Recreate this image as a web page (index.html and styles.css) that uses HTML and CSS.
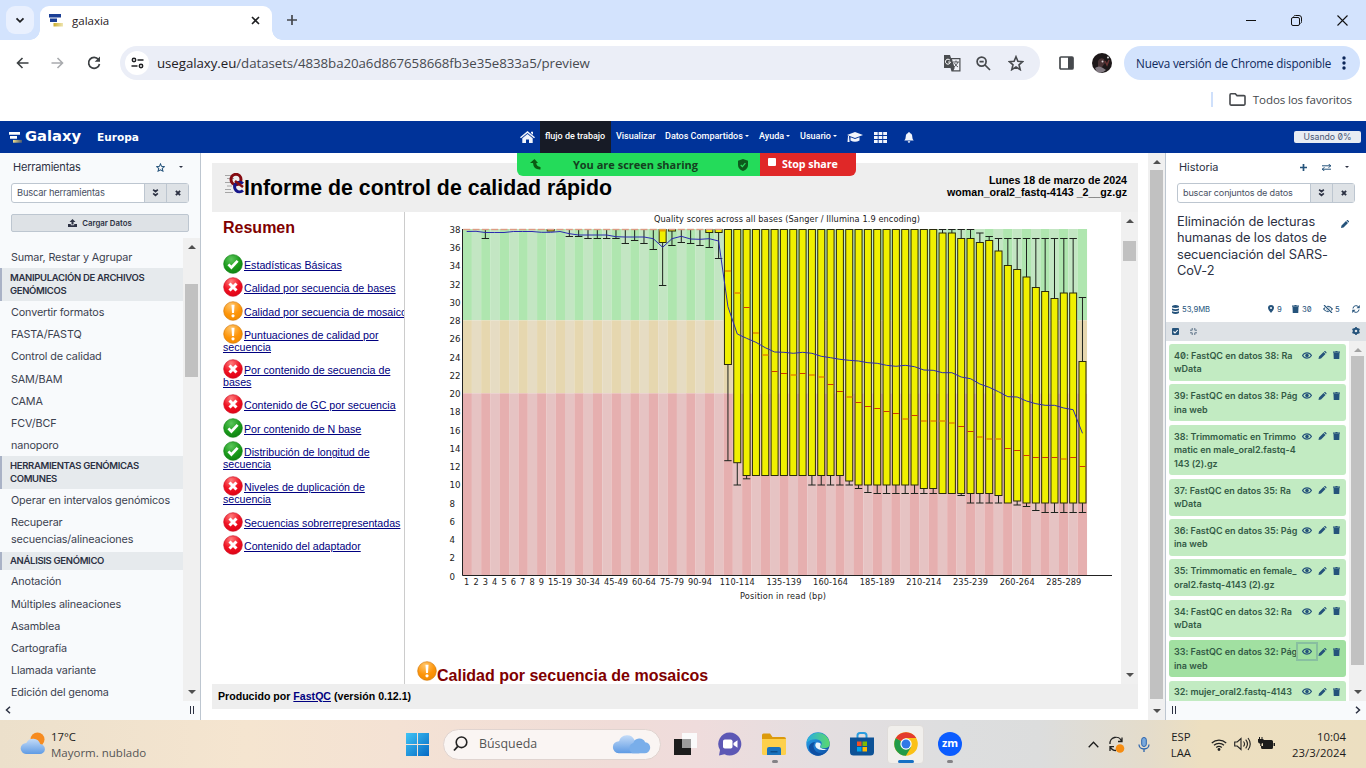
FILE: index.html
```html
<!DOCTYPE html>
<html lang="es">
<head>
<meta charset="utf-8">
<title>galaxia</title>
<link rel="stylesheet" href="styles.css">
</head>
<body>
<svg class="defs" aria-hidden="true">
  <defs>
    <radialGradient id="gOk" cx=".4" cy=".25" r=".8"><stop offset="0" stop-color="#5cc65c"/><stop offset=".6" stop-color="#1a9a1a"/><stop offset="1" stop-color="#0f7f12"/></radialGradient>
    <radialGradient id="gBad" cx=".4" cy=".2" r=".85"><stop offset="0" stop-color="#ff7d7d"/><stop offset=".55" stop-color="#f01222"/><stop offset="1" stop-color="#dd0014"/></radialGradient>
    <radialGradient id="gWarn" cx=".4" cy=".2" r=".85"><stop offset="0" stop-color="#ffc56b"/><stop offset=".6" stop-color="#fd9408"/><stop offset="1" stop-color="#f08a00"/></radialGradient>
    <linearGradient id="gCloud" x1="0" y1="0" x2="0" y2="1"><stop offset="0" stop-color="#c5dcf8"/><stop offset="1" stop-color="#5f9be4"/></linearGradient>
    <linearGradient id="gWin" x1="0" y1="0" x2="1" y2="1"><stop offset="0" stop-color="#3fc4f5"/><stop offset="1" stop-color="#0669c4"/></linearGradient>
    <linearGradient id="gGold" x1="0" y1="0" x2="1" y2="0"><stop offset="0" stop-color="#c9ab2c"/><stop offset="1" stop-color="#efe6b4"/></linearGradient>
    <linearGradient id="gGoldDark" x1="0" y1="0" x2="1" y2="0"><stop offset="0" stop-color="#f3e08a"/><stop offset="1" stop-color="#4a5a70"/></linearGradient>
    <linearGradient id="gEdge" x1="0" y1="0" x2="1" y2="1"><stop offset="0" stop-color="#2aa9e6"/><stop offset=".5" stop-color="#1b78cf"/><stop offset="1" stop-color="#0b4a9c"/></linearGradient>
    <linearGradient id="gEdge2" x1="0" y1="0" x2="1" y2="0"><stop offset="0" stop-color="#2aaee0"/><stop offset="1" stop-color="#5bd96c"/></linearGradient>
  </defs>
  <symbol id="ok" viewBox="0 0 20 20"><circle cx="10" cy="10" r="9.3" fill="url(#gOk)" stroke="#118416" stroke-width=".7"/><path d="M5.4 10.400l3 3.1 6.200-6.600" fill="none" stroke="#fff" stroke-width="2.700"/></symbol>
  <symbol id="bad" viewBox="0 0 20 20"><circle cx="10" cy="10" r="9.300" fill="url(#gBad)" stroke="#cf1426" stroke-width=".7"/><path d="M6.500 6.500l7 7M13.500 6.500l-7 7" stroke="#fff" stroke-width="3"/></symbol>
  <symbol id="warn" viewBox="0 0 20 20"><circle cx="10" cy="10" r="9.300" fill="url(#gWarn)" stroke="#d47c10" stroke-width=".7"/><path d="M8.500 3.800h3l-.5 8.200H9z" fill="#fff"/><circle cx="10" cy="14.800" r="1.600" fill="#fff"/></symbol>
  <symbol id="eye" viewBox="0 0 18 12"><path d="M1 6C4.500-.2 13.500-.2 17 6 13.500 12.200 4.500 12.200 1 6z" fill="none" stroke="currentColor" stroke-width="2.200"/><circle cx="9" cy="6" r="3.200" fill="currentColor"/></symbol>
  <symbol id="pen" viewBox="0 0 16 16"><path d="M0 16l1-5L10 2l4 4-9 9zM11 1l1-1h1.500L16 2.500V4l-1 1z" fill="currentColor"/></symbol>
  <symbol id="bin" viewBox="0 0 14 16"><path d="M0 1h4.500L5.500 0h3l1 1H14v2.500H0zM1 4h12L12.500 16h-11z" fill="currentColor"/></symbol>
  <symbol id="down2" viewBox="0 0 10 12"><path d="M1.500 1L5 4l3.500-3M1.500 6.500L5 9.500l3.500-3" fill="none" stroke="currentColor" stroke-width="2.600"/></symbol>
  <symbol id="x" viewBox="0 0 10 10"><path d="M1.500 1.500l7 7M8.500 1.500l-7 7" stroke="currentColor" stroke-width="3.200"/></symbol>
  <symbol id="cloud" viewBox="0 0 40 24"><path d="M7 22a6.500 6.500 0 0 1 .5-13 9 9 0 0 1 17-1 7.500 7.500 0 0 1 5 14z" fill="url(#gCloud)"/><path d="M22 22a6 6 0 0 1 1-11 7 7 0 0 1 13-1 6 6 0 0 1-1 12z" fill="#79aeea"/></symbol>
</svg>

<div class="screen">
  <header class="tabs">
    <span class="tab-search"><svg width="10" height="7" viewBox="0 0 10 7"><path d="M1.500 1.300L5 4.800l3.500-3.500" fill="none" stroke="#1f2023" stroke-width="1.800"/></svg></span>
    <div class="tab">
      <svg class="favicon" width="14" height="13" viewBox="0 0 14 13"><path fill="#1b3f96" d="M0 0h12v3.500H0zM1 4.500h7V8H1z"/><path fill="url(#gGold)" d="M4.500 9H14v3.500H4.500z"/></svg>
      <span class="tab-title">galaxia</span>
      <svg width="9" height="9" viewBox="0 0 9 9"><path d="M1 1l7 7M8 1L1 8" stroke="#1f2023" stroke-width="1.600"/></svg>
    </div>
    <svg class="plus" width="12" height="12" viewBox="0 0 12 12"><path d="M6 1v10M1 6h10" stroke="#45484d" stroke-width="1.700"/></svg>
    <div class="win">
      <svg width="10" height="10" viewBox="0 0 10 10"><path d="M0 5.500h10" stroke="#111"/></svg>
      <svg width="11" height="11" viewBox="0 0 11 11"><path d="M2.500 1.500q.5-1 2-1H8Q10.500.500 10.500 3v3.500q0 1.500-1 2" fill="none" stroke="#111"/><rect x=".5" y="2.500" width="8" height="8" rx="1.500" fill="none" stroke="#111"/></svg>
      <svg width="11" height="11" viewBox="0 0 11 11"><path d="M.5.500l10 10M10.500.500l-10 10" stroke="#111" stroke-width="1.100"/></svg>
    </div>
  </header>

  <div class="toolbar">
    <svg class="t-back" width="13" height="12" viewBox="0 0 13 12"><path d="M12.500 6H1.500M6.500 1L1.500 6l5 5" fill="none" stroke="#3c4043" stroke-width="1.600"/></svg>
    <svg class="t-fwd" width="13" height="12" viewBox="0 0 13 12"><path d="M.5 6h11M6.500 1l5 5-5 5" fill="none" stroke="#a9abae" stroke-width="1.600"/></svg>
    <svg class="t-reload" width="14" height="14" viewBox="0 0 14 14"><path d="M11.500 3.500A5.500 5.500 0 1 0 12.500 8" fill="none" stroke="#3c4043" stroke-width="1.700"/><path d="M13 .5v5.300H7.700L9.500 4l1.700-1.700z" fill="#3c4043"/></svg>
    <div class="omni">
      <span class="site"><svg width="13" height="12" viewBox="0 0 13 12"><g fill="none" stroke="#1f2023" stroke-width="1.500"><circle cx="3" cy="3" r="1.700"/><path d="M6.500 3H12.500M.5 9h6"/><circle cx="10" cy="9" r="1.700"/></g></svg></span>
      <span class="url"><b>usegalaxy.eu</b>/datasets/4838ba20a6d867658668fb3e35e833a5/preview</span>
      <svg class="o-tr" width="17" height="17" viewBox="0 0 17 17"><path d="M0 0h6l1 3h9.500v13.500H7.500L6.500 13H0z" fill="#4a4d51"/><path d="M8 4.300h7.300v11H9.500L10.700 13z" fill="#f2f4fa"/><path d="M6 5.300A2.500 2.500 0 1 0 6.400 7H4.200" fill="none" stroke="#fff"/><path d="M9 7h6M12 5.500V7M14 7q-1 3-4 5M10.500 8q1 2.500 3.500 4" fill="none" stroke="#4a4d51" stroke-width=".9"/></svg>
      <svg class="o-zoom" width="15" height="15" viewBox="0 0 15 15"><circle cx="5.600" cy="5.600" r="4.500" fill="none" stroke="#46494d" stroke-width="1.700"/><path d="M3.500 5.600h4.200M9 9l5 5" stroke="#46494d" stroke-width="1.700"/></svg>
      <svg width="16" height="16" viewBox="0 0 16 16"><path d="M8 1.700l1.900 4.500 4.800.4-3.700 3.200 1.200 4.800L8 12l-4.200 2.600L5 9.800 1.300 6.600l4.800-.4z" fill="none" stroke="#46494d" stroke-width="1.600"/></svg>
    </div>
    <svg class="t-side" width="15" height="14" viewBox="0 0 15 14"><rect x="1" y="1" width="13" height="12" rx="1" fill="#fff" stroke="#46494d" stroke-width="1.700"/><path d="M9 1h5v12H9z" fill="#46494d"/></svg>
    <svg class="t-face" width="20" height="20" viewBox="0 0 20 20"><circle cx="10" cy="10" r="10" fill="#1d1819"/><path d="M6 8q2-4 6-2l1 4-3 4H6z" fill="#4a3436"/><path d="M3 15q4-3 8 0l3 2q-4 4-9 2z" fill="#837b83"/><path d="M13 8l2 4 2-5" fill="none" stroke="#6a3535" stroke-width="1.500"/><circle cx="10.500" cy="8.500" r="1" fill="#d9cccd"/><circle cx="16" cy="4.500" r="1" fill="#dedede"/></svg>
    <div class="update"><span>Nueva versión de Chrome disponible</span><svg width="4" height="14" viewBox="0 0 4 14"><g fill="#0b2659"><circle cx="2" cy="2" r="1.700"/><circle cx="2" cy="7" r="1.700"/><circle cx="2" cy="12" r="1.700"/></g></svg></div>
  </div>

  <div class="bookmarks">
    <i class="bm-sep"></i>
    <svg width="17" height="13" viewBox="0 0 17 13"><path d="M1 2q0-1.200 1-1.200h4.300L8 2.600h7q1 0 1 1v7.500q0 1-1 1H2q-1 0-1-1z" fill="none" stroke="#46494d" stroke-width="1.600"/></svg>
    <span>Todos los favoritos</span>
  </div>

  <nav class="masthead">
    <svg class="logo" width="13" height="11" viewBox="0 0 13 11"><path fill="#fff" d="M0 0h11v2.800H0zM1 3.900h7v2.800H1z"/><path fill="url(#gGoldDark)" d="M4 7.900h9v2.800H4z"/></svg>
    <span class="brand">Galaxy</span><span class="region">Europa</span>
    <div class="menu">
      <svg class="m-home" width="15" height="12" viewBox="0 0 15 12"><path d="M0 6.300L7.500 0 15 6.300l-1 1L7.500 2 1 7.300zM2.300 7.300L7.500 3l5.200 4.300V12H9V8.500H6V12H2.300zM11 .7h2v3l-2-1.700z" fill="#f2f5fc"/></svg>
      <span class="m m1">flujo de trabajo</span>
      <span class="m m2">Visualizar</span>
      <span class="m m3">Datos Compartidos<i class="caret"></i></span>
      <span class="m m4">Ayuda<i class="caret"></i></span>
      <span class="m m5">Usuario<i class="caret"></i></span>
      <svg class="m-cap" width="16" height="11" viewBox="0 0 16 11"><path d="M8 0l8 3-8 3-8-3zM3.500 5.200L8 7l4.500-1.800V8.500q-4.500 2.500-9 0zM1 4h1l.6 6H.5z" fill="#f2f5fc"/></svg>
      <svg class="m-grid" width="13" height="11" viewBox="0 0 13 11"><path d="M0 0h3.700v3H0zM4.600 0h3.700v3H4.600zM9.200 0H13v3H9.200zM0 4h3.700v3H0zM4.600 4h3.700v3H4.600zM9.200 4H13v3H9.200zM0 8h3.700v3H0zM4.600 8h3.700v3H4.600zM9.200 8H13v3H9.200z" fill="#f2f5fc"/></svg>
      <svg class="m-bell" width="10" height="11" viewBox="0 0 10 11"><path d="M5 0q.8 0 .8 1Q8.300 1.600 8.300 5q0 2.200 1.400 3.500H.3Q1.700 7.200 1.700 5q0-3.400 2.500-4Q4.200 0 5 0zM3.700 9.200h2.600Q6 10.700 5 10.700T3.700 9.200z" fill="#f2f5fc"/></svg>
    </div>
    <span class="quota">Usando 0%</span>
  </nav>

  <main class="work">
    <aside class="tools">
      <div class="t-head"><span>Herramientas</span>
        <svg class="t-star" width="9" height="9" viewBox="0 0 16 16"><path d="M8 1.500l2 4.500 4.800.5-3.600 3.200 1.100 4.800L8 12l-4.300 2.500 1.100-4.800L1.200 6.500 6 6z" fill="none" stroke="#25537b" stroke-width="1.800"/></svg>
        <i class="caret dark"></i></div>
      <div class="search"><span class="field">Buscar herramientas</span><span class="sbtn"><svg width="7" height="8"><use href="#down2"/></svg></span><span class="sbtn"><svg width="6" height="6"><use href="#x"/></svg></span></div>
      <div class="upload"><svg width="9" height="8" viewBox="0 0 9 8"><path d="M4.500 0L7.500 3H5.500v2.500h-2V3h-2zM0 5h2.800v1.200h3.400V5H9v3H0z" fill="#2c3143"/></svg>Cargar Datos</div>
      <div class="tl-wrap">
        <div class="tlist">
          <p class="first">Filtrar y ordenar</p>
          <p>Sumar, Restar y Agrupar</p>
          <h4>MANIPULACIÓN DE ARCHIVOS<br>GENÓMICOS</h4>
          <p>Convertir formatos</p><p>FASTA/FASTQ</p><p>Control de calidad</p><p>SAM/BAM</p><p>CAMA</p><p>FCV/BCF</p><p>nanoporo</p>
          <h4>HERRAMIENTAS GENÓMICAS<br>COMUNES</h4>
          <p>Operar en intervalos genómicos</p><p class="two">Recuperar<br>secuencias/alineaciones</p>
          <h4>ANÁLISIS GENÓMICO</h4>
          <p>Anotación</p><p>Múltiples alineaciones</p><p>Asamblea</p><p>Cartografía</p><p>Llamada variante</p><p>Edición del genoma</p>
        </div>
        <div class="sb sb-l"><i class="up"></i><i class="thumb"></i><i class="dn"></i></div>
      </div>
      <div class="foot"><svg width="6" height="8" viewBox="0 0 6 8"><path d="M5 .8L1.500 4 5 7.200" fill="none" stroke="#2c3143" stroke-width="1.500"/></svg><i class="grip"></i></div>
    </aside>

    <section class="center">
      <div class="report">
        <div class="r-head">
          <svg width="22" height="22" viewBox="0 0 22 22"><path d="M0 2.500h9M2 5.500h7M0 9.500h6M2 13h5M0 16.500h6M0 19.500h8" stroke="#a5a5a5" stroke-width="1"/><ellipse cx="11" cy="6.500" rx="5" ry="5.200" fill="none" stroke="#850b12" stroke-width="3"/><path d="M18 10.500A5 4.800 0 1 0 18 17.500" fill="none" stroke="#16168a" stroke-width="3"/><path d="M10 8l8 6" stroke="#850b12" stroke-width="2.500"/></svg>
          <h1>Informe de control de calidad rápido</h1>
          <div class="r-meta">Lunes 18 de marzo de 2024<br>woman_oral2_fastq-4143 _2__gz.gz</div>
        </div>
        <div class="r-body">
          <div class="summary">
            <h2>Resumen</h2>
            <ul>
              <li><svg><use href="#ok"/></svg><a>Estadísticas Básicas</a></li>
              <li><svg><use href="#bad"/></svg><a>Calidad por secuencia de bases</a></li>
              <li><svg><use href="#warn"/></svg><a>Calidad por secuencia de mosaicos</a></li>
              <li class="l2"><svg><use href="#warn"/></svg><a>Puntuaciones de calidad por<br>secuencia</a></li>
              <li class="l2"><svg><use href="#bad"/></svg><a>Por contenido de secuencia de<br>bases</a></li>
              <li><svg><use href="#bad"/></svg><a>Contenido de GC por secuencia</a></li>
              <li><svg><use href="#ok"/></svg><a>Por contenido de N base</a></li>
              <li class="l2"><svg><use href="#ok"/></svg><a>Distribución de longitud de<br>secuencia</a></li>
              <li class="l2"><svg><use href="#bad"/></svg><a>Niveles de duplicación de<br>secuencia</a></li>
              <li><svg><use href="#bad"/></svg><a>Secuencias sobrerrepresentadas</a></li>
              <li><svg><use href="#bad"/></svg><a>Contenido del adaptador</a></li>
            </ul>
          </div>
          <div class="pane">
            <svg id="chart" width="716" height="448" viewBox="405 212 716 448"></svg>
            <h2 class="mod"><svg width="20" height="20"><use href="#warn"/></svg>Calidad por secuencia de mosaicos</h2>
          </div>
          <div class="sb sb-p"><i class="up"></i><i class="thumb"></i><i class="dn"></i></div>
        </div>
        <div class="r-foot">Producido por&nbsp;<a>FastQC</a>&nbsp;(versión 0.12.1)</div>
      </div>
      <div class="sb sb-c"><i class="up"></i><i class="thumb"></i><i class="dn"></i></div>
      <div class="share"><div class="sh-g"><svg width="11" height="11" viewBox="0 0 11 11"><path d="M0 4L4.500 0 8 4H6.300Q6.300 7.500 10.500 8v2.500Q3.500 11 3 4z" fill="#0a5c12"/></svg><span>You are screen sharing</span><svg width="10" height="12" viewBox="0 0 10 12"><path d="M5 0l5 1.700V6q0 4-5 6-5-2-5-6V1.700z" fill="#0d5a1c"/><path d="M2.700 6l1.700 1.700 3-3.500" fill="none" stroke="#2bdb5e" stroke-width="1.200"/></svg></div><div class="sh-r"><i></i>Stop share</div></div>
    </section>

    <aside class="history">
      <div class="h-head"><span>Historia</span>
        <svg class="h-add" width="7" height="7" viewBox="0 0 7 7"><path d="M3.500 0v7M0 3.500h7" stroke="#25537b" stroke-width="1.700"/></svg>
        <svg class="h-sw" width="9" height="7" viewBox="0 0 9 7"><path d="M0 1.800h8M9 5.200H1M6.500 0L9 1.800 6.500 3.500M2.500 3.500L0 5.200 2.500 7" fill="none" stroke="#25537b" stroke-width="1"/></svg>
        <i class="caret dark"></i></div>
      <div class="search hs"><span class="field">buscar conjuntos de datos</span><span class="sbtn"><svg width="7" height="8"><use href="#down2"/></svg></span><span class="sbtn"><svg width="6" height="6"><use href="#x"/></svg></span></div>
      <div class="h-title"><span>Eliminación de lecturas<br>humanas de los datos de<br>secuenciación del SARS-<br>CoV-2</span><svg width="8" height="8"><use href="#pen"/></svg></div>
      <div class="h-stats">
        <svg width="7" height="9" viewBox="0 0 7 9"><path d="M0 1q3.500-2 7 0v1.300q-3.500 1.500-7 0zM0 3.500q3.500 1.500 7 0v1.700q-3.500 1.500-7 0zM0 6.300q3.500 1.500 7 0V8q-3.500 2-7 0z" fill="#25537b"/></svg><span class="size">53,9MB</span>
        <svg width="6" height="8" viewBox="0 0 6 8"><path d="M3 0a3 3 0 0 1 3 3Q6 5 3 8 0 5 0 3a3 3 0 0 1 3-3z" fill="#25537b"/><circle cx="3" cy="3" r="1" fill="#fff"/></svg><span class="n1">9</span>
        <svg width="7" height="8"><use href="#bin"/></svg><span class="n2">30</span>
        <svg width="10" height="8" viewBox="0 0 10 8"><path d="M.6 4Q5-1.500 9.400 4 5 9.500.6 4z" fill="none" stroke="#25537b" stroke-width="1.200"/><circle cx="5" cy="4" r="1.500" fill="#25537b"/><path d="M1 0l8 8" stroke="#fff" stroke-width="2.200"/><path d="M1 0l8 8" stroke="#25537b" stroke-width="1.100"/></svg><span class="n3">5</span>
        <svg width="8" height="8" viewBox="0 0 16 16"><path d="M2 7a6 6 0 0 1 11-3M14 9a6 6 0 0 1-11 3" fill="none" stroke="#25537b" stroke-width="2"/><path d="M15.500 0v6.500H9zM.5 16V9.500H7z" fill="#25537b"/></svg>
      </div>
      <div class="h-ops">
        <svg width="7" height="7" viewBox="0 0 7 7"><rect width="7" height="7" rx="1" fill="#25537b"/><path d="M1.500 3.500L3 5l2.700-3" fill="none" stroke="#fff" stroke-width="1.100"/></svg>
        <svg class="cmp" width="7" height="7" viewBox="0 0 7 7"><path d="M0 2.200h2.200V0M4.800 0v2.200H7M0 4.800h2.200V7M7 4.800H4.800V7" fill="none" stroke="#5a7186"/></svg>
        <svg class="gear" width="8" height="8" viewBox="0 0 8 8"><circle cx="4" cy="4" r="2.300" fill="none" stroke="#25537b" stroke-width="2"/><path d="M4 0v1.500M4 6.500V8M.5 2l1.300.8M6.200 5.200l1.300.8M.5 6l1.300-.8M6.200 2.800L7.500 2" stroke="#25537b" stroke-width="1.600"/></svg>
      </div>
      <div class="hl-wrap">
        <div class="hlist">
          <div class="ds"><span>40: FastQC en datos 38: Ra<br>wData</span></div>
          <div class="ds"><span>39: FastQC en datos 38: Pág<br>ina web</span></div>
          <div class="ds"><span>38: Trimmomatic en Trimmo<br>matic en male_oral2.fastq-4<br>143 (2).gz</span></div>
          <div class="ds"><span>37: FastQC en datos 35: Ra<br>wData</span></div>
          <div class="ds"><span>36: FastQC en datos 35: Pág<br>ina web</span></div>
          <div class="ds"><span>35: Trimmomatic en female_<br>oral2.fastq-4143 (2).gz</span></div>
          <div class="ds"><span>34: FastQC en datos 32: Ra<br>wData</span></div>
          <div class="ds active"><span>33: FastQC en datos 32: Pág<br>ina web</span></div>
          <div class="ds"><span>32: mujer_oral2.fastq-4143</span></div>
        </div>
        <div class="sb sb-h"><i class="up off"></i><i class="thumb"></i><i class="dn"></i></div>
      </div>
      <div class="foot hf"><i class="grip"></i><svg width="6" height="8" viewBox="0 0 6 8"><path d="M1 .8L4.500 4 1 7.200" fill="none" stroke="#2c3143" stroke-width="1.500"/></svg></div>
    </aside>
  </main>

  <footer class="taskbar">
    <svg class="wx" width="26" height="24" viewBox="0 0 26 24"><circle cx="17.500" cy="7.500" r="7" fill="#f68b1f"/><path d="M6 22a5.500 5.500 0 0 1 .3-11 7.500 7.500 0 0 1 14 1 5 5 0 0 1-.8 10z" fill="url(#gCloud)"/></svg>
    <div class="wx-t">17°C<br><em>Mayorm. nublado</em></div>
    <div class="apps">
      <svg width="23" height="23" viewBox="0 0 23 23"><path d="M0 0h11v11H0zM12 0h11v11H12zM0 12h11v11H0zM12 12h11v11H12z" fill="url(#gWin)"/></svg>
      <div class="find"><svg width="15" height="16" viewBox="0 0 15 16"><circle cx="8.500" cy="6.300" r="5.300" fill="none" stroke="#222" stroke-width="1.600"/><path d="M4.800 10.300L1 14.500" stroke="#222" stroke-width="1.800"/></svg><span>Búsqueda</span><svg width="41" height="22"><use href="#cloud"/></svg></div>
      <svg class="a-tv" width="23" height="22" viewBox="0 0 23 22"><path d="M8 0h15v15H8z" fill="#fafafa"/><path d="M0 6h17v16H0z" fill="#1d1d1d"/><path d="M8 6h9v9H8z" fill="#9d9d9d"/></svg>
      <svg class="a-tm" width="24" height="24" viewBox="0 0 24 24"><path d="M12 .5a11.500 11.500 0 1 1-5.500 21.700L1 23.500 2 18A11.500 11.500 0 0 1 12 .5z" fill="#5d58b5"/><rect x="5" y="7.500" width="9.500" height="9" rx="1.800" fill="#fff"/><path d="M15.500 11l4-2.800v7.600l-4-2.800z" fill="#fff"/></svg>
      <svg class="a-ex" width="24" height="23" viewBox="0 0 24 23"><path d="M0 2q0-1.500 1.500-1.500H8L10.500 4H22q2 0 2 2v14H0z" fill="#dc9a0c"/><path d="M0 6h24v14.500q0 1.500-1.500 1.500h-21Q0 22 0 20.500z" fill="#fdd04c"/><path d="M5 22v-6q0-2 2-2h10q2 0 2 2v6z" fill="#1972bd"/><path d="M8.500 18h7v1.500h-7z" fill="#0c4e8c"/></svg>
      <svg class="a-ed" width="24" height="24" viewBox="0 0 24 24"><circle cx="12" cy="12" r="11.700" fill="url(#gEdge)"/><path d="M.5 11A11.700 11.700 0 0 1 23.700 11q.3 5-5 5.300-4.700 0-4.500-2.300 2.300-1.500 1-4.300Q13.500 7 9.500 7.200 3 7.500.5 11z" fill="url(#gEdge2)"/><path d="M9 10q-3.500 5 1 9.500 4 3 9 1.500-5 4-10.500 2Q2.500 20 3 14.500 4 10.500 9 10z" fill="#0e4fa3"/><path d="M10.500 10.500q-2.500 2.500 0 5.500 3.500 3.500 11 1.200-5 .6-7.300-1.700-.5-1.300.5-2.500.7-3-4.200-2.500z" fill="#e9f3fb"/></svg>
      <svg class="a-st" width="24" height="24" viewBox="0 0 24 24"><path d="M7.500 6V3.500Q7.500 1 10 1h4q2.500 0 2.500 2.500V6" fill="none" stroke="#2a9de0" stroke-width="2"/><path d="M0 5.500h24V20q0 3.500-3.500 3.500h-17Q0 23.500 0 20z" fill="#0d5296"/><path d="M7 9.500h4.500v4.500H7z" fill="#f25022"/><path d="M12.500 9.500H17v4.500h-4.500z" fill="#7fba00"/><path d="M7 15h4.500v4.500H7z" fill="#00a4ef"/><path d="M12.500 15H17v4.500h-4.500z" fill="#ffb900"/></svg>
      <div class="a-ch"><svg width="24" height="24" viewBox="0 0 24 24"><circle cx="12" cy="12" r="11.800" fill="#fbc116"/><path d="M1.800 6.100L12 12l5.100 2.900-5.200 8.900A11.800 11.800 0 0 1 1.800 6.100z" fill="#229b48"/><path d="M1.800 6.100A11.800 11.800 0 0 1 22.200 6.100H12l-5 3z" fill="#e33b2e"/><circle cx="12" cy="12" r="5.700" fill="#fff"/><circle cx="12" cy="12" r="4.500" fill="#3079e6"/></svg></div>
      <div class="a-zm">zm</div>
    </div>
    <div class="tray">
      <svg class="y1" width="11" height="7" viewBox="0 0 11 7"><path d="M.7 6.200L5.500 1.300l4.800 4.900" fill="none" stroke="#1c1c1c" stroke-width="1.300"/></svg>
      <svg class="y2" width="17" height="17" viewBox="0 0 17 17"><path d="M2 8a6 6 0 0 1 11.500-3M14 1.500V5.500H10M8 14.500q-4 0-5.700-3.500M2 15v-4.300h4" fill="none" stroke="#222" stroke-width="1.300"/><circle cx="12" cy="12.500" r="4.300" fill="#f68d12"/></svg>
      <svg class="y3" width="12" height="15" viewBox="0 0 12 15"><rect x="3.700" y=".5" width="4.600" height="9" rx="2.300" fill="#7aa9dc" stroke="#2a64ad"/><path d="M1 7.500a5 4.500 0 0 0 10 0M6 12v3" fill="none" stroke="#2a64ad" stroke-width="1.300"/></svg>
      <div class="lang">ESP<br>LAA</div>
      <svg class="y4" width="16" height="13" viewBox="0 0 16 13"><path d="M.8 5A10.500 10.500 0 0 1 15.200 5M3 7.300a7.300 7.300 0 0 1 10 0M5.200 9.500a4.300 4.300 0 0 1 5.600 0" fill="none" stroke="#222" stroke-width="1.200"/><circle cx="8" cy="11.500" r="1.400" fill="#222"/></svg>
      <svg class="y5" width="17" height="14" viewBox="0 0 17 14"><path d="M.7 5h2.500L7 1.500v11L3.200 9H.7zM9.500 4.500q2 2.500 0 5M11.700 2.700q3.500 4.300 0 8.600M14 1q4.500 6 0 12" fill="none" stroke="#222" stroke-width="1.100"/></svg>
      <svg class="y6" width="17" height="14" viewBox="0 0 17 14"><path d="M5 3h8.500q1.500 0 1.500 1.500v6q0 1.500-1.500 1.500H4.500Q3 12 3 10.500V9h2zM15.500 6H17v3h-1.500zM0 2h1V0h1v2h1.500V0h1v2h1v2.500Q5.500 6.500 3.500 6.700V9H2.200V6.700Q0 6.500 0 4.500z" fill="#1c1c1c"/></svg>
      <div class="clock">10:04<br>23/3/2024</div>
    </div>
  </footer>
</div>
<script src="chart.js"></script>
</body>
</html>
```
FILE: chart.js
```javascript
(function () {
  var svg = document.getElementById('chart');
  var NS = 'http://www.w3.org/2000/svg';
  var LEFT = 462.5, STEP = 9.32, TOP = 229, BASE = 575.5, N = 67;

  function add(tag, attrs, text) {
    var el = document.createElementNS(NS, tag);
    for (var k in attrs) el.setAttribute(k, attrs[k]);
    if (text !== undefined) el.textContent = text;
    svg.appendChild(el);
    return el;
  }
  function mid(i) { return 466.7 + 9.33 * i; }

  // Quality zones, striped by position
  for (var i = 0; i < N; i++) {
    var x = LEFT + STEP * i, even = i % 2 === 0;
    [[TOP, 320.3, '#afe6af', '#c3e6c3'], [320.3, 393.3, '#e6d7af', '#e6dcc3'], [393.3, BASE, '#e6afaf', '#e6c3c3']].forEach(function (z) {
      add('rect', { x: x, y: z[0], width: STEP + 0.1, height: z[1] - z[0], fill: even ? z[2] : z[3] });
    });
  }

  // [index, box top, box bottom, whisker top, whisker bottom]
  var T = 229.5;
  var boxes = [
    [2,T,T,T,238.5],[9,T,231,T,231],[11,T,T,T,236.5],[12,T,T,T,236.5],[13,T,T,T,238.5],[14,T,T,T,238.5],[15,T,T,T,238.5],[16,T,T,T,238.5],
    [17,T,T,T,243.5],[18,T,T,T,240.5],[19,T,T,T,243.5],[20,T,T,T,249.5],[21,T,242.5,T,285.5],[22,T,231,T,245.5],[23,T,T,T,242.5],
    [24,T,T,T,243.5],[25,T,T,T,245.5],[26,T,232.5,T,247.5],[27,T,232.5,T,258.5],[28,T,364.5,T,460.7],[29,T,462.7,T,485],[30,T,475.5,T,478.8],
    [31,T,475.5],[32,T,475.5],[33,T,475.5],[34,T,475.5],[35,T,475.5],[36,T,475.5],
    [37,T,475.5,T,485],[38,T,475.5,T,485],[39,T,475.5,T,485],[40,T,475.5,T,485],[41,T,481,T,485],[42,T,485,T,488.5],[43,T,485,T,492.5],
    [44,T,485,T,493.5],[45,T,485,T,493.5],[46,T,485,T,493.5],[47,T,485,T,493.5],[48,T,485,T,493.5],[49,T,488.5,T,493.5],[50,T,488.5,T,493.5],
    [51,233,493.5,T,493.5],[52,233,493.5,T,493.5],[53,238.5,493.5,T,495.5],[54,238.5,493.5,T,503],[55,242.5,493.5,233,503],[56,240.5,493.5,236.5,503],
    [57,251,495.5,238.5,503],[58,265.5,503,238.5,503],[59,269.5,501,238.5,505],[60,277,503,238.5,506.5],[61,287.5,503,238.5,510.5],
    [62,291.5,503,238.5,512.5],[63,298.5,503,238.5,512.5],[64,293,503,238.5,512.5],[65,293,503,238.5,512.5],[66,361.5,503,297.5,512.5]
  ];
  boxes.forEach(function (b) {
    var c = mid(b[0]), wt = b[3] || b[1], wb = b[4] || b[2];
    function whisker(y1, y2) {
      add('path', { d: 'M' + c + ' ' + y1 + 'V' + y2 + 'M' + (c - 3.7) + ' ' + y2 + 'h7.4', stroke: '#1c221c', fill: 'none', 'stroke-width': 1 });
    }
    if (wb > b[2]) whisker(b[2], wb);
    if (wt < b[1]) whisker(b[1], wt);
    if (b[2] > b[1]) add('rect', { x: c - 3.5, y: b[1], width: 7, height: b[2] - b[1], fill: '#f0f000', stroke: '#2b2b0c', 'stroke-width': 1 });
  });

  // Medians
  for (i = 0; i < 28; i++) {
    add('path', { d: 'M' + (mid(i) - 3.5) + ' 229.500h7', stroke: '#dc9c84', 'stroke-width': 1.4 });
  }
  add('path', { d: 'M' + (mid(21) - 3) + ' 230.5h6', stroke: '#e8a100', 'stroke-width': 2 });
  var med = [271,293,307.5,333,355,371.5,373.5,375,373.5,375,377,384.5,391.5,397,402.5,406.5,408.5,411.5,413.5,419,415.5,421,421,421,423,
    426.5,431.5,437,439,439,448.5,450.5,455.5,457.5,457.5,457.5,459,457.5,466.5];
  med.forEach(function (y, k) {
    var c = mid(28 + k), soft = y % 1 === 0;
    add('path', { d: 'M' + (c - 3) + ' ' + y + 'h6', stroke: soft ? '#e69a00' : '#cf3a00', 'stroke-width': soft ? 1.8 : 1 });
  });

  // Mean
  var mean = [231.5,231.3,232.5,232.5,232.5,231.5,231.5,231.5,232.3,232.3,231.5,233.7,235,235,235,235,236.7,237,237,237,238.7,247.3,238.7,236.3,
    239,239.3,238.7,241,306.7,334,338.3,342.3,347.7,352,352.3,353.3,352.3,353.3,356.3,357.7,359.3,360.3,361,362.7,363.3,365.3,366.3,365.3,366.7,
    370,370.3,372.7,372.7,377,378.7,384,387.3,391.7,396.7,397,401,403.7,405.3,405.3,408,409.7,433.3];
  add('polyline', { points: mean.map(function (y, k) { return mid(k) + ',' + y; }).join(' '), fill: 'none', stroke: '#2b2bb0', 'stroke-width': 1 });

  // Axes
  add('path', { d: 'M462.5 229V575.5H1112', fill: 'none', stroke: '#222', 'stroke-width': 1 });
  for (var q = 0; q <= 38; q += 2) {
    add('text', { x: 449.5, y: 579.5 - q * 9.12, textLength: q < 10 ? 5.5 : 11, lengthAdjust: 'spacingAndGlyphs' }, q);
  }
  for (i = 0; i < 9; i++) add('text', { x: mid(i), y: 585.3, 'text-anchor': 'middle' }, i + 1);
  [[10,'15-19',24],[13,'30-34',24],[16,'45-49',24],[19,'60-64',24],[22,'75-79',24],[25,'90-94',24],[29,'110-114',35],[34,'135-139',35],[39,'160-164',35],
   [44,'185-189',35],[49,'210-214',35],[54,'235-239',35],[59,'260-264',35],[64,'285-289',35]].forEach(function (l) {
    add('text', { x: mid(l[0]) - l[2] / 2, y: 585.3, textLength: l[2] }, l[1]);
  });
  add('text', { x: 654, y: 222, textLength: 266 }, 'Quality scores across all bases (Sanger / Illumina 1.9 encoding)');
  add('text', { x: 740, y: 599, textLength: 86 }, 'Position in read (bp)');

  // Row actions for each dataset card
  document.querySelectorAll('.ds').forEach(function (d) {
    d.insertAdjacentHTML('beforeend', '<div class="acts"><i class="eye"><svg width="10" height="7"><use href="#eye"/></svg></i><svg width="9" height="8"><use href="#pen"/></svg><svg width="7" height="8"><use href="#bin"/></svg></div>');
  });
})();
```
FILE: styles.css
```css
* { box-sizing: border-box; }
body { margin: 0; overflow: hidden; background: #fff; font-family: Inter, sans-serif; }
.defs { position: absolute; width: 0; height: 0; }
svg { display: block; flex: none; }
h1, h2, h4, p, ul { margin: 0; padding: 0; list-style: none; font-weight: inherit; }
.screen { width: 1366px; height: 768px; display: flex; flex-direction: column; white-space: nowrap; overflow: hidden; }

/* Browser chrome */
.tabs { height: 40px; background: #d3e3fd; display: flex; align-items: center; font-family: "Open Sans", sans-serif; }
.tab-search { width: 28px; height: 28px; margin-left: 6px; border-radius: 9px; background: #e9f0fe; display: grid; place-items: center; }
.tab { width: 232px; height: 34px; margin: 6px 0 0 6px; padding: 0 12px 6px 9px; background: #fff; border-radius: 9px 9px 0 0; display: flex; align-items: center; position: relative; }
.tab::before, .tab::after { content: ""; position: absolute; bottom: 0; width: 10px; height: 10px; }
.tab::before { left: -10px; background: radial-gradient(circle at 0 0, transparent 9.5px, #fff 10px); }
.tab::after { right: -10px; background: radial-gradient(circle at 100% 0, transparent 9.5px, #fff 10px); }
.tab-title { flex: 1; margin-left: 9px; font-size: 11.5px; color: #1f2023; }
.plus { margin-left: 14px; }
.win { margin-left: auto; display: flex; align-items: center; gap: 35px; padding-right: 18px; }
.toolbar { height: 46px; display: flex; align-items: center; background: #fff; font-family: "Open Sans", sans-serif; }
.t-back { margin-left: 16px; }
.t-fwd { margin-left: 22px; }
.t-reload { margin-left: 23px; }
.omni { width: 920px; height: 34px; margin-left: 19px; border-radius: 17px; background: #ebeef7; display: flex; align-items: center; padding: 0 16px 0 5px; }
.site { width: 24px; height: 24px; border-radius: 50%; background: #fff; display: grid; place-items: center; }
.url { flex: 1; margin-left: 8px; font-size: 13.3px; letter-spacing: -.065px; color: #474a50; }
.url b { font-weight: 400; color: #1f2023; }
.o-zoom { margin: 0 17px 0 15px; }
.t-side { margin-left: 19px; }
.t-face { margin-left: 18px; }
.update { width: 236px; height: 34px; margin-left: 12px; padding: 0 14px 0 12px; border-radius: 17px; background: #d3e3fd; color: #0f2a5c; font-size: 11.7px; letter-spacing: -.17px; display: flex; align-items: center; justify-content: space-between; }
.bookmarks { height: 35px; padding: 0 14px 8px 0; display: flex; align-items: center; justify-content: flex-end; font: 11.6px "Open Sans", sans-serif; letter-spacing: -.14px; color: #45484d; background: #fff; }
.bm-sep { width: 2px; height: 15px; background: #cfe0fb; margin-right: 16px; }
.bookmarks span { margin-left: 7px; }

/* Masthead */
.masthead { height: 32px; background: #039; color: #fff; display: flex; align-items: center; position: relative; }
.logo { margin-left: 9px; }
.brand { font: bold 14.7px "DejaVu Sans", sans-serif; margin: 0 0 3px 3px; width: 72px; }
.region { font: bold 10.6px "DejaVu Sans", sans-serif; }
.menu { position: absolute; left: 520px; top: 0; height: 32px; display: flex; align-items: center; font: 500 9px Roboto, sans-serif; }
.m { height: 32px; line-height: 31px; }
.m1 { width: 71px; margin-left: 5px; padding-left: 5px; background: #171b26; }
.m2 { margin-left: 5px; width: 49px; }
.m3 { width: 94px; }
.m4 { width: 41px; }
.m5 { width: 47px; }
.caret { display: inline-block; margin-left: 2px; vertical-align: 2px; border: 2px solid transparent; border-top-color: #fff; border-bottom: 0; }
.caret.dark { border-top-color: #2c3143; }
.m-grid { margin-left: 11px; }
.m-bell { margin-left: 17px; }
.quota { position: absolute; left: 1294px; top: 10px; width: 67px; height: 12px; border-radius: 2px; background: #e8ecf3; color: #465775; font: 8.7px/12px Inter, sans-serif; font-feature-settings: "zero"; text-align: center; }

/* Work area */
.work { height: 567px; display: flex; }
.tools { width: 201px; border-right: 1px solid #bdc6d0; background: #f8fafc; display: flex; flex-direction: column; color: #2c3143; }
.t-head { height: 30px; padding: 0 17px 2px 13px; display: flex; align-items: center; font-size: 11px; letter-spacing: -.2px; }
.t-star { margin-left: auto; }
.t-head .caret { margin-left: 14px; }
.search { height: 20px; margin: 0 11px; border: 1px solid #bdc6d0; border-radius: 3px; display: flex; background: #fff; font-size: 9.3px; letter-spacing: -.18px; color: #495163; flex: none; }
.field { flex: 1; padding-left: 5px; line-height: 18px; }
.search.hs { font-size: 9.1px; letter-spacing: -.18px; }
.sbtn { width: 22px; border-left: 1px solid #bdc6d0; background: #dee2e6; color: #2c3143; display: grid; place-items: center; }
.upload { height: 18px; margin: 11px 11px 0 11px; border: 1px solid #bdc6d0; border-radius: 2px; background: #dee2e6; font-size: 7.8px; font-weight: 600; display: flex; align-items: center; justify-content: center; gap: 5px; }
.tl-wrap { display: flex; height: 463px; margin-top: 6px; overflow: hidden; }
.tlist { width: 183px; overflow: hidden; }
.tlist p { height: 22.2px; padding-left: 11px; font-size: 10.8px; letter-spacing: -.14px; line-height: 23px; color: #3c4250; }
.tlist .first { margin-top: -14px; line-height: 15px; }
.tlist .two { height: 40.3px; line-height: 17px; padding-top: 3px; }
.tlist h4 { border-left: 2px solid #a9b2c6; background: #e6eaed; padding: 2.200px 0 2.900px 8px; font-size: 9.5px; letter-spacing: -.32px; font-weight: 600; line-height: 13.800px; color: #2c3143; }
.foot { height: 19px; display: flex; align-items: center; justify-content: space-between; padding: 0 6px 2px 5px; background: #f8fafc; }
.grip { width: 4px; height: 8px; border: solid #2c3143; border-width: 0 1px; }

/* Scrollbars */
.sb { width: 17px; background: #f0f0f0; display: flex; flex-direction: column; align-items: center; flex: none; }
.sb .up, .sb .dn { border: 4px solid transparent; width: 0; height: 0; }
.sb .up { border-top: 0; border-bottom-color: #505050; margin-top: 7px; }
.sb .up.off { border-bottom-color: #a3a3a3; }
.sb .dn { border-bottom: 0; border-top-color: #505050; margin-top: auto; margin-bottom: 7px; }
.sb .thumb { width: 13px; background: #c1c1c1; }
.sb-l .thumb { margin-top: 35px; height: 93px; }
.sb-p .thumb { margin-top: 18px; height: 20px; }
.sb-c .thumb { margin-top: 6px; height: 529px; }
.sb-h .thumb { margin-top: 4px; height: 309px; }

/* Report */
.center { width: 964px; display: flex; justify-content: space-between; padding-left: 11px; background: #fff; position: relative; font-family: "Liberation Sans", Arial, sans-serif; }
.report { width: 926px; padding-top: 10px; }
.r-head { height: 49px; background: #eee; display: flex; align-items: center; padding: 0 11px 0 13px; color: #000; }
.r-head > svg { margin-bottom: 7px; }
.r-head h1 { font-size: 21.3px; font-weight: bold; margin: 2px 0 0 -3px; }
.r-meta { margin: 0 0 3px auto; font-size: 10.67px; line-height: 12px; font-weight: bold; text-align: right; }
.r-body { height: 472px; display: flex; }
.summary { width: 193px; border-right: 1px solid #ccc; padding: 6px 0 0 11px; overflow: hidden; }
h2 { font-size: 16px; font-weight: bold; color: #800000; line-height: 19px; }
.summary ul { margin-top: 16.500px; }
.summary li { height: 23.3px; display: flex; font-size: 10.67px; }
.summary li svg { width: 20px; height: 20px; margin: .5px 1px 0 0; }
.summary a, .r-foot a { color: #000080; text-decoration: underline; }
.summary a { line-height: 12px; padding-top: 5.500px; }
.summary .l2 { height: 35.300px; }
.summary .l2 a { text-indent: 21px; margin-left: -21px; }
.pane { width: 716px; overflow: hidden; display: flex; flex-direction: column; }
#chart { flex: none; }
#chart text { font: 8.2px "DejaVu Sans", sans-serif; fill: #222; }
.mod { display: flex; align-items: center; padding-left: 12px; height: 30px; flex: none; }
.mod svg { margin-bottom: 8px; }
.r-foot { height: 25px; background: #eee; padding-left: 6px; font-size: 10.6px; font-weight: bold; line-height: 24px; }
.share { position: absolute; left: 316px; top: 0; width: 339px; height: 23px; display: flex; border-radius: 0 0 6px 6px; overflow: hidden; font: bold 11px/23px "Open Sans", sans-serif; }
.sh-g { width: 243px; background: #24db5a; color: #14401f; display: flex; align-items: center; justify-content: space-between; padding: 0 12px 0 13px; }
.sh-g span { margin-right: 8px; }
.sh-r { flex: 1; background: #e02828; color: #fff; padding-left: 8px; display: flex; font-size: 10.7px; line-height: 22px; letter-spacing: -.1px; }
.sh-r i { width: 8px; height: 8px; background: #fff; border-radius: 1px; margin: 5px 6px 0 0; }

/* History */
.history { width: 201px; border-left: 1px solid #bdc6d0; background: #fff; display: flex; flex-direction: column; color: #2c3143; font-feature-settings: "zero"; }
.h-head { height: 30px; padding: 0 17px 2px 13px; display: flex; align-items: center; font-size: 10.9px; }
.h-add { margin-left: auto; }
.h-sw { margin: 0 14px 0 15px; }
.h-head .caret { margin-left: 0; }
.h-title { height: 95px; padding: 11px 17px 0 11px; display: flex; justify-content: space-between; font-size: 12.8px; letter-spacing: -.06px; line-height: 16.300px; flex: none; }
.h-title svg { color: #25537b; margin-top: 6px; }
.h-stats { height: 24px; padding: 0 6px 2px 6px; display: flex; align-items: center; font-size: 7.700px; color: #25537b; flex: none; }
.size { margin-left: 3px; width: 86px; }
.n1 { width: 15px; margin-left: 3px; }
.n2 { width: 21px; margin-left: 3px; }
.n3 { width: 12px; margin-left: 2px; }
.h-stats > svg:last-child { margin-left: auto; }
.h-ops { height: 19px; background: #dee2e6; display: flex; align-items: center; padding: 0 6px 1px 6px; flex: none; }
.cmp { margin-left: 11px; }
.gear { margin-left: auto; }
.hl-wrap { height: 360px; display: flex; justify-content: space-between; overflow: hidden; }
.hlist { margin: 3px 0 0 3px; width: 177px; display: flex; flex-direction: column; gap: 3.400px; overflow: hidden; }
.ds { background: #c2ebc2; border-radius: 3px; padding: 4.800px 6px 5px 5px; display: flex; justify-content: space-between; font-size: 9px; letter-spacing: -.01px; line-height: 13.600px; font-weight: 600; color: #335a45; flex: none; }
.ds:last-child { height: 37px; }
.ds.active { background: #a1e0a1; }
.acts { display: flex; gap: 6px; color: #25537b; align-items: center; height: 13px; }
.acts .eye { padding: 3px; margin: 0 -3px; }
.ds.active .eye { outline: 2px solid #88bfa0; outline-offset: 1.500px; }
.foot.hf { padding: 0 5px 2px 6px; }

/* Taskbar */
.taskbar { height: 48px; position: relative; background: linear-gradient(90deg, #ece0cb 0, #f5e5d0 18%, #f4e2d4 29%, #f0dcd8 45%, #efdcdc 51%, #e4dee0 60%, #dddedf 70%, #dcdddd 76%, #e4dccb 84%, #eddfc0 88%, #ecdfc1 100%); display: flex; align-items: center; font-family: "Open Sans", sans-serif; color: #1c1c1c; font-size: 11.300px; line-height: 16px; }
.wx { margin-left: 20px; }
.wx-t { margin: 1px 0 0 5px; }
.wx-t em { font-style: normal; color: #555; font-size: 11.500px; }
.apps { position: absolute; left: 406px; top: 0; height: 48px; display: flex; align-items: center; }
.find { width: 218px; height: 31px; margin-left: 14px; border-radius: 16px; background: #faf5f3; border: 1px solid #e0d4d0; display: flex; align-items: center; padding: 0 9px; font-size: 12.400px; color: #555; }
.find span { margin-left: 11px; flex: 1; }
.a-tv { margin-left: 13px; }
.a-tm { margin-left: 21px; }
.a-ex, .a-ed, .a-st { margin-left: 20px; }
.a-ch { width: 37px; height: 39px; margin-left: 13px; border-radius: 4px; background: #f1efec; border: 1px solid #dfdcda; display: grid; place-items: center; position: relative; }
.a-ch::after { content: ""; position: absolute; bottom: 0; left: 10px; width: 16px; height: 3px; border-radius: 2px; background: #1670c4; }
.a-zm { width: 24px; height: 24px; margin-left: 14px; border-radius: 50%; background: #0b5cff; color: #fff; font: bold 11px/22px "Open Sans", sans-serif; text-align: center; position: relative; }
.a-zm::after, .apps::after { content: ""; position: absolute; width: 6px; height: 3px; border-radius: 2px; background: #848286; }
.a-zm::after { left: 9px; bottom: -7px; }
.apps::after { left: 366px; bottom: 5px; }
.tray { margin-left: auto; display: flex; align-items: center; padding-right: 20px; }
.y2 { margin-left: 9px; }
.y3 { margin-left: 13px; }
.lang { margin: 1px 0 0 21px; text-align: center; }
.y4 { margin-left: 20px; }
.y5 { margin-left: 7px; }
.y6 { margin-left: 7px; }
.clock { width: 71px; margin-top: 1px; text-align: right; letter-spacing: .05px; }
```
